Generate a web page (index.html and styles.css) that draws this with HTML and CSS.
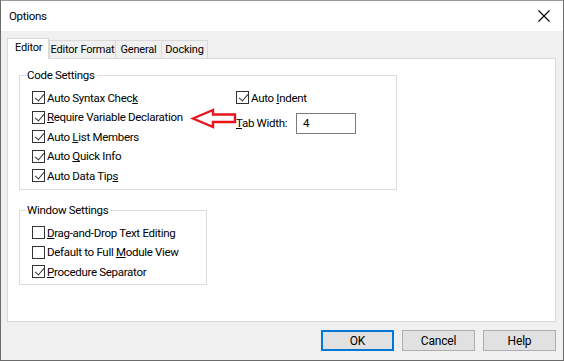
FILE: index.html
```html
<!DOCTYPE html>
<html>
<head>
<meta charset="utf-8">
<link rel="stylesheet" href="styles.css">
</head>
<body>
<div class="window">
  <div class="titlebar">
    <span class="title">Options</span>
    <svg class="close" width="12" height="12" viewBox="0 0 12 12"><path d="M0.5 0.5 L11.5 11.5 M11.5 0.5 L0.5 11.5" stroke="#000" stroke-width="1.1" fill="none"/></svg>
  </div>
  <div class="body">
    <div class="tabs">
      <div class="tab active">Editor</div>
      <div class="tab t-format">Editor Format</div>
      <div class="tab t-general">General</div>
      <div class="tab t-dock">Docking</div>
    </div>
    <div class="panel">
      <fieldset class="group code">
        <legend>Code Settings</legend>
        <div class="code-cols">
          <div class="col left">
            <label class="cb"><span class="box checked"></span><span>Auto Syntax Chec<u>k</u></span></label>
            <label class="cb"><span class="box checked"></span><span><u>R</u>equire Variable Declaration</span></label>
            <label class="cb"><span class="box checked"></span><span>Auto <u>L</u>ist Members</span></label>
            <label class="cb"><span class="box checked"></span><span>Auto <u>Q</u>uick Info</span></label>
            <label class="cb"><span class="box checked"></span><span>Auto Data Tip<u>s</u></span></label>
          </div>
          <div class="col right">
            <label class="cb"><span class="box checked"></span><span>Auto <u>I</u>ndent</span></label>
            <div class="tabwidth">
              <span class="tw-label"><u>T</u>ab Width:</span>
              <span class="input">4</span>
            </div>
          </div>
        </div>
        <svg class="arrow" width="48" height="26" viewBox="0 0 48 26"><path d="M3 13.5 L23 5 L23 9.5 L45 9.5 L45 17 L23 17 L23 22 Z" fill="#fff" stroke="#e8141e" stroke-width="2.4" stroke-linejoin="miter"/></svg>
      </fieldset>
      <fieldset class="group window-set">
        <legend>Window Settings</legend>
        <label class="cb"><span class="box"></span><span><u>D</u>rag-and-Drop Text Editing</span></label>
        <label class="cb"><span class="box"></span><span>Default to Full <u>M</u>odule View</span></label>
        <label class="cb"><span class="box checked"></span><span><u>P</u>rocedure Separator</span></label>
      </fieldset>
    </div>
    <div class="buttons">
      <button class="btn default">OK</button>
      <button class="btn">Cancel</button>
      <button class="btn">Help</button>
    </div>
  </div>
</div>
</body>
</html>
```

FILE: styles.css
```css
* { box-sizing: border-box; }
html, body { margin: 0; padding: 0; }
body {
  width: 564px;
  height: 361px;
  font-family: Roboto, "Noto Sans", sans-serif;
  font-size: 11.5px;
  letter-spacing: -0.3px;
  color: #000;
  overflow: hidden;
}
.window {
  width: 564px;
  height: 361px;
  border: 1px solid #6b6b6b;
  border-top-color: #9a9a9a;
  display: flex;
  flex-direction: column;
  background: #f0f0f0;
}
.titlebar {
  height: 30px;
  background: #fff;
  display: flex;
  align-items: center;
  justify-content: space-between;
  padding: 0 12px 0 8px;
  flex: none;
}
.title { font-size: 11.5px; }
.close { margin-right: 1px; }
.body {
  flex: 1;
  display: flex;
  flex-direction: column;
  padding: 7px 7px 0 6px;
}
.tabs {
  display: flex;
  align-items: flex-end;
  height: 20px;
  position: relative;
  z-index: 1;
}
.tab {
  height: 18px;
  border: 1px solid #d9d9d9;
  border-bottom: none;
  margin-left: -1px;
  line-height: 17px;
  background: #f0f0f0;
  text-align: center;
  white-space: nowrap;
  flex: none;
  padding: 0;
  font-size: 11px;
  letter-spacing: -0.2px;
}
.tab.active {
  width: 42px;
  height: 21px;
  margin-left: 0;
  margin-bottom: -1px;
  background: #fff;
  line-height: 18px;
  text-align: left;
  padding-left: 7px;
}
.tab.t-format { width: 67px; margin-left: 0; }
.tab.t-general { width: 47px; }
.tab.t-dock { width: 47px; }
.panel {
  height: 264px;
  background: #fff;
  border: 1px solid #d9d9d9;
  padding: 9px 0 0 11px;
  display: flex;
  flex-direction: column;
  gap: 13px;
}
.group {
  margin: 0;
  border: 1px solid #dcdcdc;
  padding: 0 0 0 12px;
  position: relative;
}
.group legend {
  padding: 0 2px 0 1px;
  margin-left: -6px;
  line-height: 14px;
}
.code {
  width: 378px;
  height: 122px;
  padding-top: 6px;
}
.window-set {
  width: 188px;
  height: 82px;
  padding-top: 6px;
}
.code-cols { display: flex; }
.col { display: flex; flex-direction: column; }
.col.left { width: 204px; }
.cb {
  display: flex;
  align-items: center;
  height: 19.5px;
  white-space: nowrap;
}
.box {
  width: 13px;
  height: 13px;
  border: 1px solid #333;
  background: #fff;
  margin-right: 2px;
  flex: none;
  position: relative;
}
.box.checked::after {
  content: "";
  position: absolute;
  left: 3.5px;
  top: 0px;
  width: 4px;
  height: 8px;
  border-right: 1.3px solid #333;
  border-bottom: 1.3px solid #333;
  transform: rotate(40deg);
}
.tabwidth {
  display: flex;
  align-items: center;
  margin-top: 5px;
}
.tw-label { width: 60px; }
.input {
  width: 60px;
  height: 21px;
  border: 1px solid #7a7a7a;
  padding-left: 6px;
  line-height: 19px;
}
.arrow {
  position: absolute;
  left: 170px;
  top: 23px;
}
.buttons {
  display: flex;
  justify-content: flex-end;
  gap: 8px;
  padding: 8px 0 0 0;
}
.btn {
  width: 73px;
  height: 21px;
  font-family: inherit;
  font-size: 12px;
  letter-spacing: -0.2px;
  background: #e1e1e1;
  border: 1px solid #adadad;
  padding: 0;
  color: #000;
}
.btn.default { border: 2px solid #0078d7; }
```
